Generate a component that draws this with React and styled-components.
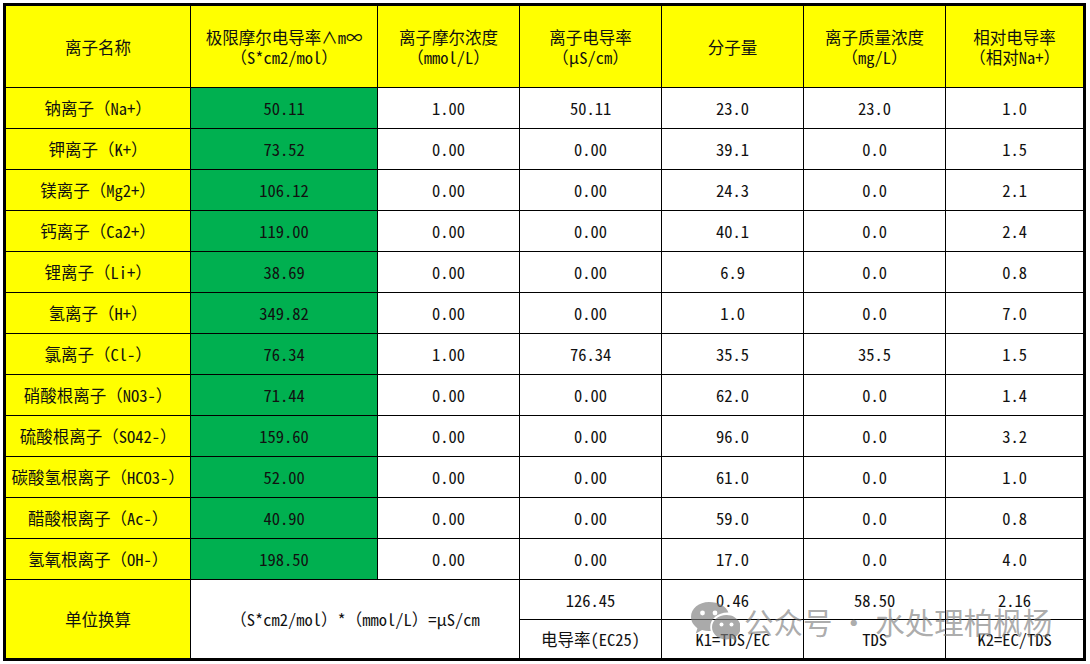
import React from "react";
import styled, { createGlobalStyle } from "styled-components";

const GlobalStyle = createGlobalStyle`
  html, body {
    margin: 0;
    padding: 0;
    background: #fff;
  }
  body {
    padding: 3px;
    font-family: "Noto Sans Mono CJK SC", "Noto Sans CJK SC", "Liberation Mono", monospace;
  }
`;

const Page = styled.div`
  position: relative;
  width: 1083px;
`;

const Sheet = styled.div`
  display: grid;
  grid-template-columns: 184px 186px 141px 141px 141px 141px 137px;
  grid-template-rows: 81px repeat(12, 40px) 39px 38px;
  gap: 1px;
  background: #000;
  border: 3px solid #000;
`;

const Cell = styled.div`
  display: flex;
  flex-direction: column;
  align-items: center;
  justify-content: center;
  background: ${(p) => (p.$tone === "yellow" ? "#ffff00" : p.$tone === "green" ? "#00b050" : "#fff")};
  color: #111;
  font-size: 16.5px;
  line-height: 20px;
  white-space: nowrap;
  grid-row: ${(p) => p.$rows || "auto"};
  grid-column: ${(p) => p.$cols || "auto"};
`;

const Watermark = styled.div`
  position: absolute;
  left: 687px;
  top: 597px;
  display: flex;
  align-items: center;
  gap: 4px;
  color: rgba(125, 125, 125, 0.65);
  font-family: "Noto Sans CJK SC", sans-serif;
  font-size: 29.5px;
  line-height: 42px;
  pointer-events: none;
`;

const headers = [
  ["离子名称"],
  ["极限摩尔电导率∧m∞", "（S*cm2/mol）"],
  ["离子摩尔浓度", "（mmol/L）"],
  ["离子电导率", "（μS/cm）"],
  ["分子量"],
  ["离子质量浓度", "（mg/L）"],
  ["相对电导率", "（相对Na+）"],
];

const rows = [
  ["钠离子（Na+）", "50.11", "1.00", "50.11", "23.0", "23.0", "1.0"],
  ["钾离子（K+）", "73.52", "0.00", "0.00", "39.1", "0.0", "1.5"],
  ["镁离子（Mg2+）", "106.12", "0.00", "0.00", "24.3", "0.0", "2.1"],
  ["钙离子（Ca2+）", "119.00", "0.00", "0.00", "40.1", "0.0", "2.4"],
  ["锂离子（Li+）", "38.69", "0.00", "0.00", "6.9", "0.0", "0.8"],
  ["氢离子（H+）", "349.82", "0.00", "0.00", "1.0", "0.0", "7.0"],
  ["氯离子（Cl-）", "76.34", "1.00", "76.34", "35.5", "35.5", "1.5"],
  ["硝酸根离子（NO3-）", "71.44", "0.00", "0.00", "62.0", "0.0", "1.4"],
  ["硫酸根离子（SO42-）", "159.60", "0.00", "0.00", "96.0", "0.0", "3.2"],
  ["碳酸氢根离子（HCO3-）", "52.00", "0.00", "0.00", "61.0", "0.0", "1.0"],
  ["醋酸根离子（Ac-）", "40.90", "0.00", "0.00", "59.0", "0.0", "0.8"],
  ["氢氧根离子（OH-）", "198.50", "0.00", "0.00", "17.0", "0.0", "4.0"],
];

const WeChatIcon = () => (
  <svg width="50" height="42" viewBox="0 0 50 42" fill="rgba(125,125,125,0.65)">
    <path d="M19 2C9 2 1 8.6 1 16.8c0 4.6 2.5 8.6 6.4 11.4L5.8 33.5l6.3-3.4c2.1.6 4.4 1 6.9 1 .6 0 1.2 0 1.8-.1-.4-1.3-.6-2.6-.6-4 0-8 7.6-14.5 17.2-14.5h1C36.5 6.5 28.6 2 19 2z" />
    <circle cx="12.5" cy="13" r="2.4" fill="#fff" />
    <circle cx="25" cy="13" r="2.4" fill="#fff" />
    <path d="M36.5 15C28.4 15 22 20.4 22 27.2s6.4 12.2 14.5 12.2c1.8 0 3.6-.3 5.2-.8l5 2.7-1.3-4.4c3.2-2.3 5.3-5.6 5.3-9.3C50.7 20.4 44.3 15 36.5 15z" />
    <circle cx="31.5" cy="24.5" r="2" fill="#fff" />
    <circle cx="41.5" cy="24.5" r="2" fill="#fff" />
  </svg>
);

const App = () => (
  <Page>
    <GlobalStyle />
    <Sheet>
      {headers.map((h, i) => (
        <Cell key={i} $tone="yellow">
          {h.map((line, j) => (
            <span key={j}>{line}</span>
          ))}
        </Cell>
      ))}
      {rows.map((r, i) =>
        r.map((v, j) => (
          <Cell key={`${i}-${j}`} $tone={j === 0 ? "yellow" : j === 1 ? "green" : undefined}>
            {v}
          </Cell>
        ))
      )}
      <Cell $tone="yellow" $rows="span 2">单位换算</Cell>
      <Cell $rows="span 2" $cols="span 2">（S*cm2/mol）*（mmol/L）=μS/cm</Cell>
      <Cell>126.45</Cell>
      <Cell>0.46</Cell>
      <Cell>58.50</Cell>
      <Cell>2.16</Cell>
      <Cell>电导率(EC25)</Cell>
      <Cell>K1=TDS/EC</Cell>
      <Cell>TDS</Cell>
      <Cell>K2=EC/TDS</Cell>
    </Sheet>
    {/* watermark sits over the footer cells, as in the screenshot */}
    <Watermark>
      <WeChatIcon />
      <span>公众号 · 水处理柏枫杨</span>
    </Watermark>
  </Page>
);

export default App;
